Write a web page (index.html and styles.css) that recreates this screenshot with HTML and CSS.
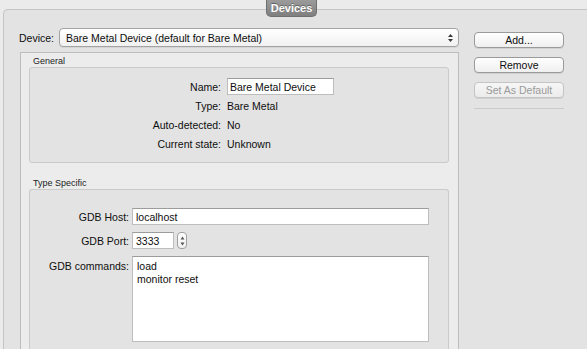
FILE: index.html
```html
<!DOCTYPE html>
<html lang="en">
<head>
  <meta charset="UTF-8">
  <title>Devices</title>
  <link rel="stylesheet" href="styles.css">
</head>
<body>

<!-- Devices group box -->
<div class="devices">
  <div class="tab">Devices</div>

  <!-- Left column: device chooser and details -->
  <div class="main">
    <div class="device-row">
      <span class="device-label">Device:</span>
      <div class="popup">
        <span>Bare Metal Device (default for Bare Metal)</span>
        <svg class="popup-arrows" width="7" height="10" viewBox="0 0 7 10">
          <path d="M3.5 1 L6 4 L1 4 Z M3.5 9 L6 6 L1 6 Z" fill="#3a3a3a"/>
        </svg>
      </div>
    </div>

    <div class="panel">
      <div class="group-title">General</div>
      <div class="group general">
        <span class="label">Name:</span>
        <div class="field name-field">Bare Metal Device</div>
        <span class="label">Type:</span>
        <span class="value">Bare Metal</span>
        <span class="label">Auto-detected:</span>
        <span class="value">No</span>
        <span class="label">Current state:</span>
        <span class="value">Unknown</span>
      </div>

      <div class="group-title spaced">Type Specific</div>
      <div class="group specific">
        <span class="label">GDB Host:</span>
        <div class="field host-field">localhost</div>
        <span class="label">GDB Port:</span>
        <div class="port-row">
          <div class="field port-field">3333</div>
          <div class="stepper">
            <svg width="5" height="12" viewBox="0 0 5 12">
              <path d="M2.5 1.5 L4.5 4.5 L0.5 4.5 Z M2.5 10.5 L4.5 7.5 L0.5 7.5 Z" fill="#555"/>
            </svg>
          </div>
        </div>
        <span class="label top">GDB commands:</span>
        <div class="field commands">load<br>monitor reset</div>
      </div>
    </div>
  </div>

  <!-- Right column: buttons -->
  <div class="side">
    <button class="btn">Add...</button>
    <button class="btn">Remove</button>
    <button class="btn" disabled>Set As Default</button>
    <div class="separator"></div>
  </div>
</div>

</body>
</html>
```

FILE: styles.css
```css
body {
  margin: 0;
  height: 349px;
  overflow: hidden;
  background-color: #ebebeb;
  font-family: "Liberation Sans", Arial, sans-serif;
  font-size: 10.5px;
  color: #0e0e0e;
}

.devices {
  position: relative;
  display: flex;
  gap: 15px;
  width: 584px;
  height: 340px;
  margin: 9px 0 0 3px;
  padding: 19px 0 0 16px;
  box-sizing: border-box;
  border: 1px solid #c4c4c4;
  border-right: none;
  border-bottom: none;
  border-radius: 5px 0 0 0;
  background-color: #e3e3e3;
}

/* Title tab sitting over the top border */
.tab {
  position: absolute;
  top: -10px;
  left: 262px;
  width: 51px;
  height: 17px;
  line-height: 17px;
  text-align: center;
  box-sizing: border-box;
  border: 1px solid #6f6f6f;
  border-top: none;
  border-radius: 0 0 5px 5px;
  background: linear-gradient(#9b9b9b, #7f7f7f);
  color: white;
  font-size: 11px;
  font-weight: bold;
  text-shadow: 0 -1px 0 rgba(0, 0, 0, 0.35);
}

.main {
  display: flex;
  flex-direction: column;
  width: 439px;
}

.device-row {
  display: flex;
  align-items: center;
  height: 17px;
}

.device-label {
  width: 39px;
  margin-left: -1px;
  margin-right: 1px;
}

.popup {
  flex: 1;
  display: flex;
  align-items: center;
  justify-content: space-between;
  height: 17px;
  padding: 0 4px 0 6px;
  border: 1px solid #a3a3a3;
  border-radius: 4px;
  background: linear-gradient(#ffffff, #f1f1f1);
  box-shadow: 0 1px 0 rgba(0, 0, 0, 0.06);
}

.panel {
  flex: 1;
  display: flex;
  flex-direction: column;
  min-height: 0;
  overflow: hidden;
  margin-top: 6px;
  padding: 0 9px 0 8px;
  border: 1px solid #bdbdbd;
  border-bottom: none;
  background-color: #ececec;
}

.group-title {
  padding: 2px 0 0 4px;
  line-height: 12px;
  font-size: 9px;
  color: #222;
}

.group-title.spaced {
  margin-top: 12px;
}

.group {
  display: grid;
  column-gap: 6px;
  align-items: center;
  border: 1px solid #cacaca;
  border-radius: 3px;
  background-color: #e3e3e3;
}

.general {
  grid-template-columns: 191px 1fr;
  grid-template-rows: 19px 19px 19px 20px;
  height: 96px;
  box-sizing: border-box;
  padding-top: 9px;
}

.specific {
  flex: 1;
  grid-template-columns: 99px 1fr;
  align-content: start;
  column-gap: 3px;
  row-gap: 7px;
  padding-top: 18px;
  border-bottom: none;
  border-radius: 3px 3px 0 0;
}

.label {
  text-align: right;
}

.label.top {
  align-self: start;
  padding-top: 4px;
}

.field {
  height: 17px;
  line-height: 16px;
  padding: 0 3px;
  box-sizing: border-box;
  border: 1px solid #bdbdbd;
  border-top-color: #9c9c9c;
  background-color: white;
  white-space: nowrap;
}

.name-field {
  width: 107px;
  padding-left: 2px;
}

.host-field {
  width: 297px;
}

.port-row {
  display: flex;
  align-items: center;
  gap: 3px;
}

.port-field {
  width: 42px;
}

.stepper {
  display: flex;
  align-items: center;
  justify-content: center;
  width: 10px;
  height: 17px;
  box-sizing: border-box;
  border: 1px solid #a0a0a0;
  border-radius: 4px;
  background: linear-gradient(#ffffff, #f0f0f0);
}

.commands {
  width: 297px;
  height: 86px;
  padding: 3px 4px;
  line-height: 13px;
}

/* Button column */
.side {
  display: flex;
  flex-direction: column;
  gap: 9px;
  width: 90px;
  padding-top: 3px;
}

.btn {
  height: 16px;
  padding: 0;
  border: 1px solid #9a9a9a;
  border-radius: 4px;
  background: linear-gradient(#ffffff, #efefef);
  box-shadow: 0 1px 0 rgba(0, 0, 0, 0.08);
  font-family: inherit;
  font-size: 10.5px;
  color: #0e0e0e;
}

.btn:disabled {
  border-color: #c4c4c4;
  background: linear-gradient(#f6f6f6, #ececec);
  color: #9a9a9a;
}

.separator {
  margin-top: 1px;
  height: 1px;
  background-color: #cbcbcb;
}
```
